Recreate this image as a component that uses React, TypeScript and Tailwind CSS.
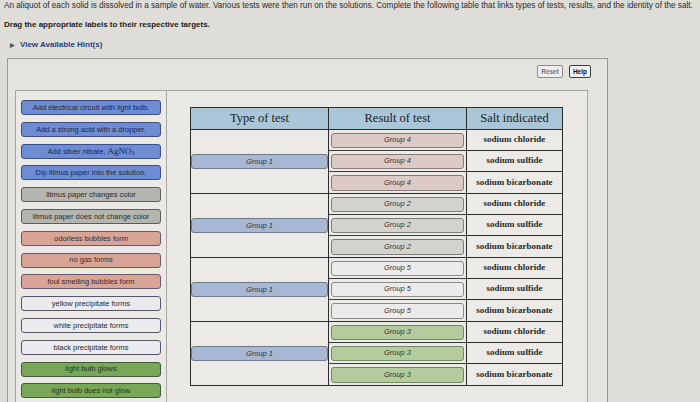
import React from "react";

type Tone = "blue" | "gray" | "pink" | "white" | "green";

const labelTone: Record<Tone, string> = {
  blue: "bg-[#6d8cd4] border-[#3d4f86] text-[#1d2742]",
  gray: "bg-[#b5b5af] border-[#5c5c5c] text-[#2a2a2a]",
  pink: "bg-[#d8a495] border-[#6d5670] text-[#3a2a2a]",
  white: "bg-[#ebebee] border-[#55566e] text-[#2a2a2a]",
  green: "bg-[#77a757] border-[#3f5d39] text-[#1f3418]",
};

const tagTone: Record<string, string> = {
  "Group 1": "bg-[#a8b7d2] border-[#6c7a95]",
  "Group 2": "bg-[#d3d3ce] border-[#7c7c78]",
  "Group 3": "bg-[#b4cc9d] border-[#6f8a5c]",
  "Group 4": "bg-[#dccac6] border-[#8a7975]",
  "Group 5": "bg-[#ecebe9] border-[#8a8a88]",
};

const labels: { text: React.ReactNode; tone: Tone }[] = [
  { text: "Add electrical circuit with light bulb.", tone: "blue" },
  { text: "Add a strong acid with a dropper.", tone: "blue" },
  {
    text: (
      <>
        Add silver nitrate,{" "}
        <span className="font-['Liberation_Serif',serif] text-[9px]">
          AgNO<sub className="text-[6px]">3</sub>
        </span>
      </>
    ),
    tone: "blue",
  },
  { text: "Dip litmus paper into the solution.", tone: "blue" },
  { text: "litmus paper changes color", tone: "gray" },
  { text: "litmus paper does not change color", tone: "gray" },
  { text: "odorless bubbles form", tone: "pink" },
  { text: "no gas forms", tone: "pink" },
  { text: "foul smelling bubbles form", tone: "pink" },
  { text: "yellow precipitate forms", tone: "white" },
  { text: "white precipitate forms", tone: "white" },
  { text: "black precipitate forms", tone: "white" },
  { text: "light bulb glows", tone: "green" },
  { text: "light bulb does not glow", tone: "green" },
];

const groups = [
  { test: "Group 1", result: "Group 4" },
  { test: "Group 1", result: "Group 2" },
  { test: "Group 1", result: "Group 5" },
  { test: "Group 1", result: "Group 3" },
];

const salts = ["sodium chloride", "sodium sulfide", "sodium bicarbonate"];

function Tag({ name, className = "" }: { name: string; className?: string }) {
  return (
    <div
      className={`flex items-center justify-center rounded-[3px] border text-[7.5px] italic text-[#333] ${tagTone[name]} ${className}`}
    >
      {name}
    </div>
  );
}

export default function App() {
  return (
    <div className="h-[402px] w-[700px] overflow-hidden bg-[#dfddd8] font-['Liberation_Sans',Arial,sans-serif] text-[#222]">
      <div className="px-[4px] pt-[1px]">
        <p className="whitespace-nowrap text-[8.2px] leading-[10px] text-[#2a2a2a]">
          An aliquot of each solid is dissolved in a sample of water. Various tests were then run on the
          solutions. Complete the following table that links types of tests, results, and the identity of the salt.
        </p>
        <p className="mt-[9px] text-[8px] font-bold leading-[10px]">
          Drag the appropriate labels to their respective targets.
        </p>
        <p className="mt-[10px] flex items-center gap-[5px] pl-[6px] text-[8px] font-bold leading-[10px] text-[#1f3f86]">
          <span className="text-[6px] text-[#555]">▶</span>
          View Available Hint(s)
        </p>
      </div>

      <div className="ml-[7px] mt-[8px] w-[601px] border border-[#9a9894] bg-[#e5e3de] pb-[40px]">
        <div className="flex justify-end gap-[6px] pr-[16px] pt-[6px]">
          <button className="h-[13px] rounded-[2px] border border-[#8d8d8d] bg-[#eeeeec] px-[3px] text-[6.5px] font-bold leading-[11px] text-[#777]">
            Reset
          </button>
          <button className="h-[13px] rounded-[2px] border border-[#3a3a3a] bg-[#f2f2f0] px-[3px] text-[6.5px] font-bold leading-[11px] text-[#111]">
            Help
          </button>
        </div>

        <div className="ml-[7px] mt-[12px] flex w-[573px] border border-[#a8a6a1] bg-[#ebe9e5]">
          {/* draggable answer labels */}
          <div className="flex w-[151px] shrink-0 flex-col gap-[6.8px] border-r border-[#a8a6a1] px-[5px] pb-[30px] pt-[9px]">
            {labels.map((l, i) => (
              <div
                key={i}
                className={`flex h-[15px] items-center justify-center rounded-[3px] border-[1.5px] text-[7.5px] leading-none ${labelTone[l.tone]}`}
              >
                <span>{l.text}</span>
              </div>
            ))}
          </div>

          <div className="pl-[23px] pt-[16px]">
            <div className="w-[373px] border-[1.5px] border-[#2b2b2b] bg-[#ebeae6] font-['Liberation_Serif',serif]">
              <div className="grid h-[22px] grid-cols-[138px_138px_1fr] border-b-[1.5px] border-[#2b2b2b] bg-[#a9c7d9] text-[12.5px] text-[#1c1c1c]">
                <div className="flex items-center justify-center border-r-[1.5px] border-[#2b2b2b]">Type of test</div>
                <div className="flex items-center justify-center border-r-[1.5px] border-[#2b2b2b]">Result of test</div>
                <div className="flex items-center justify-center">Salt indicated</div>
              </div>

              {groups.map((g, gi) => (
                <div
                  key={gi}
                  className={`grid grid-cols-[138px_138px_1fr] ${gi < groups.length - 1 ? "border-b-[1.5px] border-[#2b2b2b]" : ""}`}
                >
                  <div className="flex h-[63px] items-center border-r-[1.5px] border-[#2b2b2b] font-['Liberation_Sans',Arial,sans-serif]">
                    <Tag name={g.test} className="h-[15px] w-full" />
                  </div>
                  <div className="flex flex-col border-r-[1.5px] border-[#2b2b2b] font-['Liberation_Sans',Arial,sans-serif]">
                    {salts.map((_, ri) => (
                      <div
                        key={ri}
                        className={`h-[21px] px-[2px] py-[2.5px] ${ri < 2 ? "border-b border-[#3a3a3a]" : ""}`}
                      >
                        <Tag name={g.result} className="h-full" />
                      </div>
                    ))}
                  </div>
                  <div className="flex flex-col">
                    {salts.map((s, ri) => (
                      <div
                        key={s}
                        className={`flex h-[21px] items-center justify-center text-[9px] font-bold text-[#2a2a2a] ${ri < 2 ? "border-b-[1.5px] border-[#2b2b2b]" : ""}`}
                      >
                        {s}
                      </div>
                    ))}
                  </div>
                </div>
              ))}
            </div>
          </div>
        </div>
      </div>
    </div>
  );
}
